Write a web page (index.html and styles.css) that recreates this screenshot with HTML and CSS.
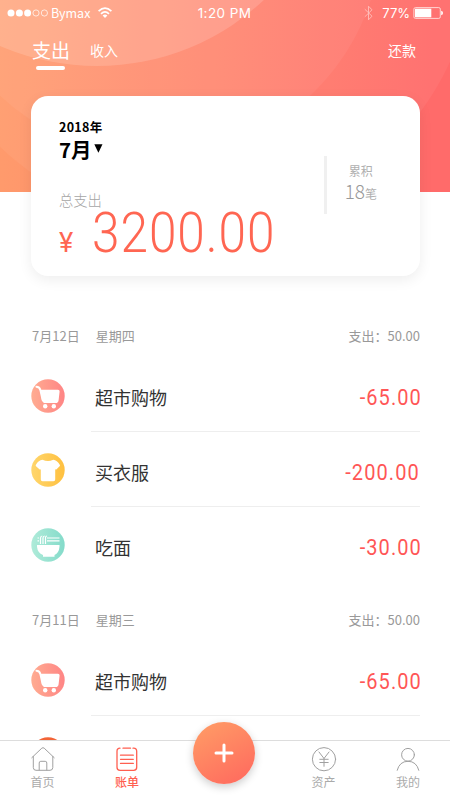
FILE: index.html
```html
<!DOCTYPE html>
<html lang="zh-CN">
<head>
<meta charset="utf-8">
<title>账单</title>
<link rel="stylesheet" href="styles.css">
</head>
<body>
<svg class="defs" width="0" height="0" aria-hidden="true">
  <defs>
    <linearGradient id="pink"><stop offset="0" stop-color="#ffac91"/><stop offset="1" stop-color="#ff8585"/></linearGradient>
    <linearGradient id="gold"><stop offset="0" stop-color="#ffd66c"/><stop offset="1" stop-color="#ffc03f"/></linearGradient>
    <linearGradient id="mint"><stop offset="0" stop-color="#afebd9"/><stop offset="1" stop-color="#84dbca"/></linearGradient>
    <symbol id="cart" viewBox="0 0 34 34">
      <circle cx="17" cy="17" r="16.7" fill="url(#pink)"/>
      <path d="M5.4 7.8Q8.6 7.8 9.4 11.2L11.6 21" fill="none" stroke="#fff" stroke-width="1.9" stroke-linecap="round"/>
      <path d="M9.2 10.8H27Q28.7 10.8 28.6 12.5L27.6 21.2Q27.3 24 24.7 24H14.2Q11.6 24 11 21.2Z" fill="#fff"/>
      <circle cx="14.2" cy="27.2" r="2.2" fill="#fff"/><circle cx="22.8" cy="27.2" r="2.2" fill="#fff"/>
    </symbol>
    <symbol id="shirt" viewBox="0 0 34 34">
      <circle cx="17" cy="17" r="16.7" fill="url(#gold)"/>
      <path d="M11.5 6.8Q17 9.4 22.3 6.8Q26 7.2 28.9 12Q29.2 12.8 28.6 13.3L25.6 16.2Q25 16.6 24.2 16.2V26.5Q24.2 28.2 22.5 28.2H11.5Q9.8 28.2 9.8 26.5V16.2Q9 16.6 8.4 16.2L5 13.3Q4.5 12.8 4.8 12Q7.5 7.2 11.5 6.8Z" fill="#fff"/>
    </symbol>
    <symbol id="bowl" viewBox="0 0 34 34">
      <circle cx="17" cy="17" r="16.7" fill="url(#mint)"/>
      <path d="M6 17H28.5V18.8Q28 25 23.5 27V28.7H12V27Q6.6 25 6 18.8Z" fill="#fff"/>
      <path d="M16 10H28.5M16 12.8H28.5M6.5 10H8M6.5 12.8H8M9.5 16V10Q9.7 8 11.3 8M12 16V10Q12.2 8 13.8 8M14.5 16V9.5Q14.7 8 16 8" fill="none" stroke="#fff" stroke-width="1.2"/>
    </symbol>
  </defs>
</svg>
<div class="app">
  <header class="hero">
    <svg class="hero-art" viewBox="0 0 450 192" aria-hidden="true">
      <circle cx="195" cy="-55" r="280.5"/>
      <circle cx="155" cy="-70" r="227"/>
      <circle class="bright" cx="97" cy="-178" r="244"/>
    </svg>
    <div class="status">
      <div class="status-left">
        <svg width="42" height="10" viewBox="0 0 42 10"><g fill="#fff"><circle cx="4" cy="5" r="3.5"/><circle cx="12.4" cy="5" r="3.5"/><circle cx="20.6" cy="5" r="3.5"/></g><g fill="none" stroke="#fff" stroke-width=".7"><circle cx="29" cy="5" r="3.1"/><circle cx="37.4" cy="5" r="3.1"/></g></svg>
        <span class="carrier">Bymax</span>
        <svg class="wifi" width="14" height="12" viewBox="0 0 14 12"><g fill="none" stroke="#fff" stroke-width="1.7"><path d="M.6 4.2Q7-2 13.4 4.2M3 6.8Q7 3 11 6.8"/></g><path d="M4.6 8.5Q7 6.6 9.4 8.5L7 11Z" fill="#fff"/></svg>
      </div>
      <span class="clock">1:20 PM</span>
      <div class="status-right">
        <svg class="bt" width="9" height="16" viewBox="0 0 9 16"><path d="M.8 4.2L8 11.2L4.5 14.8V1.2L8 4.8L.8 11.8" fill="none" stroke="#ffc0bc" stroke-width=".9"/></svg>
        <span class="percent">77%</span>
        <svg width="31" height="12" viewBox="0 0 31 12"><rect x=".9" y=".6" width="26.4" height="10.8" rx="1.5" fill="none" stroke="#ffd5d3" stroke-width="1"/><path d="M2 1.7H18.3V10.3H2Z" fill="#fff"/><path d="M28.2 3.8Q30 4.2 30 6Q30 7.8 28.2 8.2Z" fill="#fff"/></svg>
      </div>
    </div>
    <nav class="tabs">
      <span class="tab active">支出</span>
      <span class="tab">收入</span>
      <span class="tab repay">还款</span>
    </nav>
  </header>

  <section class="card">
    <div class="summary">
      <div class="year">2018年</div>
      <div class="month">7月<svg width="9" height="9" viewBox="0 0 9 9"><path d="M.3.3H8.5L4.4 8.8Z"/></svg></div>
      <div class="label">总支出</div>
      <div class="total"><span class="yen">¥</span><span class="sum">3200.00</span></div>
    </div>
    <div class="count">
      <div>累积</div>
      <div><span class="num">18</span>笔</div>
    </div>
  </section>

  <main class="list">
    <div class="day"><span>7月12日</span><span class="week">星期四</span><span class="spent">支出：50.00</span></div>
    <div class="row"><svg class="icon"><use href="#cart"/></svg><div class="entry"><span>超市购物</span><span class="amount">-65.00</span></div></div>
    <div class="row"><svg class="icon"><use href="#shirt"/></svg><div class="entry"><span>买衣服</span><span class="amount wide">-200.00</span></div></div>
    <div class="row last"><svg class="icon"><use href="#bowl"/></svg><div class="entry"><span>吃面</span><span class="amount">-30.00</span></div></div>
    <div class="day second"><span>7月11日</span><span class="week">星期三</span><span class="spent">支出：50.00</span></div>
    <div class="row"><svg class="icon"><use href="#cart"/></svg><div class="entry"><span>超市购物</span><span class="amount">-65.00</span></div></div>
    <div class="row next"><svg class="icon" viewBox="0 0 34 34"><circle cx="17" cy="17" r="16.7" fill="#f26437"/></svg></div>
  </main>

  <nav class="bar">
    <div class="item"><svg width="26" height="26" viewBox="0 0 26 26"><path d="M1.8 11.7L11.8 2.2Q13 1.2 14.2 2.2L24.2 11.7M3.3 10.5V21.5Q3.3 24.3 6 24.3H20Q22.8 24.3 22.8 21.5V10.5M9.2 24V17Q9.2 15.3 10.8 15.3H15.2Q16.8 15.3 16.8 17V24"/></svg><span>首页</span></div>
    <div class="item on"><svg width="26" height="26" viewBox="0 0 26 26"><path d="M6 2.2Q3 2.2 3 5.2V21.2Q3 24.3 6 24.3H19.7Q22.7 24.3 22.7 21.2V5.2Q22.7 2.2 19.7 2.2H19M9 2.2H16.5M6.5 9.2H19.3M6.5 13.3H19.3M6.5 17.4H19.3"/></svg><span>账单</span></div>
    <div class="add"><svg width="20" height="20" viewBox="0 0 20 20"><path d="M10 2V18M2 10H18"/></svg></div>
    <div class="item"><svg width="26" height="26" viewBox="0 0 26 26"><circle cx="13" cy="13.2" r="11.6"/><path d="M8 6L13 12.5L18 6M13 12.5V20.3M8.8 13.3H17.2M8.8 16.5H17.2"/></svg><span>资产</span></div>
    <div class="item"><svg width="26" height="26" viewBox="0 0 26 26"><circle cx="13" cy="8.8" r="6.4"/><path d="M2.2 24.3Q4.5 15.3 13 15.3T23.8 24.3"/></svg><span>我的</span></div>
  </nav>
</div>
</body>
</html>
```

FILE: styles.css
```css
* { box-sizing: border-box; }
body { margin: 0; background: #fff; }
.defs { position: absolute; }
.app {
  position: relative;
  width: 450px;
  height: 800px;
  overflow: hidden;
  background: #fff;
  font-family: "Noto Sans CJK SC", sans-serif;
  color: #333;
}
.hero {
  position: relative;
  height: 192px;
  background: linear-gradient(92deg, #ff9b6c 0%, #ff6b6a 95%);
  color: #fff;
}
.hero-art { position: absolute; left: 0; top: 0; width: 450px; height: 192px; fill: rgba(255, 255, 255, .05); }
.hero-art .bright { fill: rgba(255, 255, 255, .15); }
.status {
  position: relative;
  display: grid;
  grid-template-columns: 1fr auto 1fr;
  align-items: center;
  height: 26px;
  padding: 0 6px 0 7px;
  line-height: 26px;
}
.status-left, .status-right { display: flex; align-items: center; }
.status-right { justify-content: flex-end; }
.carrier { margin-left: 2px; font-size: 12.5px; width: 40px; }
.wifi { margin-left: 7px; }
.clock, .percent { font-family: Inter, sans-serif; font-size: 13px; }
.clock { margin-right: 2px; font-size: 13.5px; letter-spacing: .4px; }
.bt { margin-right: 9px; }
.percent { margin-right: 3px; }
.tabs { position: relative; display: flex; align-items: center; height: 48px; padding: 0 34px 0 32px; }
.tab { font-size: 14px; line-height: 20px; }
.tab.active { position: relative; margin-right: 20px; font-size: 19px; line-height: 28px; }
.tab.active::after { content: ""; position: absolute; left: 4px; top: 30px; width: 29px; height: 4px; border-radius: 2px; background: #fff; }
.repay { margin-left: auto; }
.card {
  position: relative;
  display: flex;
  justify-content: space-between;
  width: 389px;
  height: 180px;
  margin: -96px 0 0 31px;
  padding: 21px 43px 0 28px;
  border-radius: 17px;
  background: #fff;
  box-shadow: 0 4px 14px rgba(0, 0, 0, .07);
}
.year { font-size: 12.5px; font-weight: 700; line-height: 20px; letter-spacing: .3px; color: #000; }
.month { display: flex; align-items: center; height: 25px; font-size: 20.5px; font-weight: 700; line-height: 25px; color: #000; }
.month svg { margin: 0 0 3px 2px; }
.label { margin-top: 28px; font-size: 14.3px; font-weight: 300; line-height: 20px; color: #a5a5a5; }
.total { display: flex; align-items: baseline; height: 46px; color: #ff6652; line-height: 46px; white-space: nowrap; }
.yen { width: 33px; font: 400 27px/46px Roboto, sans-serif; }
.sum { font: 300 55px/46px Roboto, sans-serif; letter-spacing: 1.1px; transform: scaleX(.9); transform-origin: left; }
.count {
  align-self: flex-start;
  height: 58px;
  margin-top: 39px;
  padding: 5px 0 0 18px;
  border-left: 3px solid #f0f0f0;
  text-align: center;
  font-size: 12px;
  line-height: 20px;
  color: #b0b0b0;
}
.num { font-size: 19px; font-weight: 300; color: #999; }
.list { padding: 48px 30px 0 31px; }
.day { display: flex; height: 24px; padding-left: 1px; font-size: 13px; line-height: 24px; color: #999; }
.week { margin-left: 16px; }
.spent { margin-left: auto; }
.row { display: flex; height: 75px; }
.day + .row { height: 84px; padding-top: 9px; }
.icon { flex: none; width: 34px; height: 34px; margin-top: 21px; }
.day + .row .icon { margin-top: 22px; }
.entry {
  flex: 1;
  display: flex;
  align-items: center;
  justify-content: space-between;
  height: 75px;
  margin-left: 26px;
  padding: 6px 0 0 4px;
  border-bottom: 1px solid #eee;
  font-size: 18px;
}
.last .entry { border-color: transparent; }
.second { margin-top: 26px; }
.amount { margin-right: -2px; font: 400 22.5px/30px Roboto, sans-serif; letter-spacing: 1.2px; color: #ff5656; transform: scaleX(.89); transform-origin: right; }
.wide { margin-right: 0; }
.bar {
  position: absolute;
  left: 0;
  bottom: 0;
  display: grid;
  grid-template-columns: 85px 84px 110px 89px 80px;
  justify-items: center;
  width: 450px;
  height: 60px;
  padding-top: 5px;
  border-top: 1px solid #ddd;
  background: #fff;
}
.item { display: flex; flex-direction: column; align-items: center; width: 26px; font-size: 12px; line-height: 20px; color: #aaa; white-space: nowrap; }
.item svg { flex: none; fill: none; stroke: #a0a0a0; stroke-width: 1; stroke-linecap: round; }
.item.on { color: #ff5f50; font-weight: 500; }
.item.on svg { stroke: #ff5f50; stroke-width: 1.3; }
.add {
  display: flex;
  align-items: center;
  justify-content: center;
  width: 62px;
  height: 62px;
  margin-top: -24px;
  border-radius: 50%;
  background: linear-gradient(150deg, #ff9e66, #ff675e);
  box-shadow: 0 3px 8px rgba(0, 0, 0, .2);
}
.add svg { fill: none; stroke: #fff; stroke-width: 3; stroke-linecap: round; }
```
